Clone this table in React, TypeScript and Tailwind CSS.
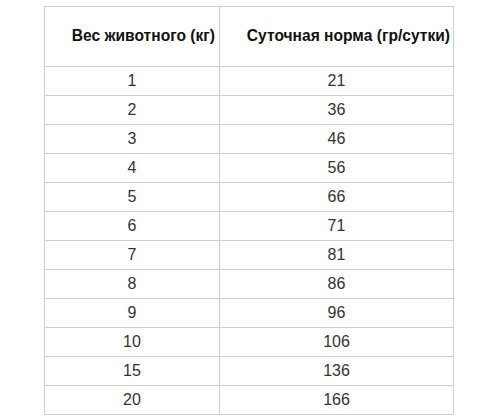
import React from "react";

const rows: [string, string][] = [
  ["1", "21"],
  ["2", "36"],
  ["3", "46"],
  ["4", "56"],
  ["5", "66"],
  ["6", "71"],
  ["7", "81"],
  ["8", "86"],
  ["9", "96"],
  ["10", "106"],
  ["15", "136"],
  ["20", "166"],
];

export default function App() {
  return (
    <div
      className="w-[500px] h-[420px] bg-white pt-[6px] pl-[44px]"
      style={{ fontFamily: '"Liberation Sans", Arial, sans-serif' }}
    >
      <table className="border-collapse w-[409px] table-fixed">
        <colgroup>
          <col className="w-[175px]" />
          <col className="w-[234px]" />
        </colgroup>
        <thead>
          <tr className="h-[60px]">
            <th className="border border-[#cfcfcf] text-[15.6px] font-bold text-[#111] text-right pr-[4px] pb-[1px] align-middle whitespace-nowrap">
              Вес животного (кг)
            </th>
            <th className="border border-[#cfcfcf] text-[15.6px] font-bold text-[#111] text-right pr-[3px] pb-[1px] align-middle whitespace-nowrap">
              Суточная норма (гр/сутки)
            </th>
          </tr>
        </thead>
        <tbody>
          {rows.map(([w, n]) => (
            <tr key={w} className="h-[29px]">
              <td className="border border-[#cfcfcf] text-center text-[16px] text-[#333] p-0 align-middle">
                {w}
              </td>
              <td className="border border-[#cfcfcf] text-center text-[16px] text-[#333] p-0 align-middle">
                {n}
              </td>
            </tr>
          ))}
        </tbody>
      </table>
    </div>
  );
}
